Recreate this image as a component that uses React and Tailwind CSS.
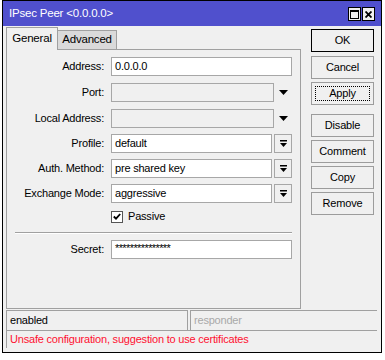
const Field = ({ label, value, disabled, width = "w-[181px]", children, className = "" }) => (
  <div className={`flex items-center h-[19px] ${className}`}>
    <div className="w-[98px] pr-[1px] text-right">{label}</div>
    <div
      className={`ml-[6px] h-[19px] ${width} border border-[#a7a7a7] pl-[3px] flex items-center ${
        disabled ? "bg-[#f0f0f0]" : "bg-white"
      }`}
    >
      {value}
    </div>
    {children}
  </div>
);

const DropButton = () => (
  <div className="ml-[2px] w-[18px] h-[19px] border border-[#a7a7a7] bg-[#f0f0f0] flex items-center justify-center">
    <svg width="7" height="8" viewBox="0 0 7 8">
      <path d="M0 0h7v1.5H0z" fill="#000" />
      <path d="M0 3h7L3.5 7z" fill="#000" />
    </svg>
  </div>
);

const Arrow = () => (
  <svg className="ml-[5px]" width="9" height="5" viewBox="0 0 9 5">
    <path d="M0 0h9L4.5 5z" fill="#000" />
  </svg>
);

const Button = ({ children, className = "", main, focus }) => (
  <div
    className={`h-[23px] w-[63px] flex items-center justify-center bg-[#f0f0f0] ${
      main ? "border border-black" : "border border-[#9c9c9c]"
    } ${className}`}
  >
    {focus ? (
      <div className="w-[55px] h-[15px] border border-dotted border-black flex items-center justify-center">
        {children}
      </div>
    ) : (
      children
    )}
  </div>
);

export default function App() {
  return (
    <div className="bg-white w-[385px] h-[360px] pl-[2px] font-['Liberation_Sans',Arial,sans-serif] text-[11px] tracking-[-0.2px] text-black leading-none">
      <div className="w-[380px] h-[353px] border border-black bg-[#f0f0f0] flex flex-col">
        {/* Title bar */}
        <div className="h-[25px] bg-[#5050cd] flex items-center justify-between pl-[6px] pr-[6px] text-white text-[11.5px]">
          <span>IPsec Peer &lt;0.0.0.0&gt;</span>
          <div className="flex gap-[1px] pt-[1px]">
            <div className="w-[13px] h-[14px] border border-black bg-[#f0f0f0] flex items-center justify-center">
              <div className="w-[9px] h-[9px] border border-black border-t-2" />
            </div>
            <div className="w-[13px] h-[14px] border border-black bg-[#f0f0f0] flex items-center justify-center">
              <svg width="7" height="7" viewBox="0 0 7 7">
                <path d="M0.5 0.5l6 6M6.5 0.5l-6 6" stroke="#000" strokeWidth="1.8" />
              </svg>
            </div>
          </div>
        </div>

        {/* Body */}
        <div className="flex h-[284px]">
          <div className="pl-[3px] pt-[1px] w-[301px]">
            {/* Tabs */}
            <div className="flex items-end h-[22px]">
              <div className="w-[52px] h-[23px] border border-b-0 border-[#a0a0a0] bg-[#f0f0f0] flex items-center justify-center relative top-[1px] text-[11.5px]">
                General
              </div>
              <div className="w-[59px] h-[19px] border border-b-0 border-l-0 border-[#a0a0a0] bg-[#dadada] flex items-center justify-center text-[11.5px]">
                Advanced
              </div>
            </div>
            {/* Panel */}
            <div className="w-[295px] h-[260px] border border-[#a0a0a0] pt-[7px]">
              <Field label="Address:" value="0.0.0.0" />
              <Field label="Port:" disabled width="w-[163px]" className="mt-[7px]">
                <Arrow />
              </Field>
              <Field label="Local Address:" disabled width="w-[163px]" className="mt-[7px]">
                <Arrow />
              </Field>
              <Field label="Profile:" value="default" width="w-[161px]" className="mt-[6px]">
                <DropButton />
              </Field>
              <Field label="Auth. Method:" value="pre shared key" width="w-[161px]" className="mt-[6px]">
                <DropButton />
              </Field>
              <Field label="Exchange Mode:" value="aggressive" width="w-[161px]" className="mt-[6px]">
                <DropButton />
              </Field>
              <div className="flex items-center mt-[7px] pl-[104px] h-[13px]">
                <div className="w-[12px] h-[12px] border border-[#555] bg-white flex items-center justify-center">
                  <svg width="8" height="7" viewBox="0 0 8 7">
                    <path d="M0.8 3.5l2.2 2.2L7.2 1" stroke="#000" strokeWidth="1.8" fill="none" />
                  </svg>
                </div>
                <span className="ml-[5px]">Passive</span>
              </div>
              <div className="ml-[8px] mt-[9px] w-[277px] border-t border-[#a0a0a0] border-b border-b-white" />
              <Field label="Secret:" value={<span className="tracking-[-0.6px] -mt-[3px]">***************</span>} className="mt-[6px]" />
            </div>
          </div>

          {/* Buttons */}
          <div className="ml-[7px] pt-[3px] flex flex-col">
            <Button main>OK</Button>
            <Button className="mt-[4px]">Cancel</Button>
            <Button className="mt-[3px]" focus>Apply</Button>
            <Button className="mt-[9px]">Disable</Button>
            <Button className="mt-[3px]">Comment</Button>
            <Button className="mt-[3px]">Copy</Button>
            <Button className="mt-[3px]">Remove</Button>
          </div>
        </div>

        {/* Status */}
        <div className="pl-[3px]">
          <div className="flex h-[20px]">
            <div className="w-[182px] border-t border-l border-r border-[#a0a0a0] pl-[3px] flex items-center">enabled</div>
            <div className="ml-[2px] w-[187px] border-t border-l border-[#a0a0a0] pl-[3px] flex items-center text-[#a9a9a9]">
              responder
            </div>
          </div>
          <div className="w-[371px] h-[18px] border-t border-l border-[#a0a0a0] pl-[3px] flex items-center text-[#ff1030]">
            Unsafe configuration, suggestion to use certificates
          </div>
        </div>
      </div>
    </div>
  );
}
